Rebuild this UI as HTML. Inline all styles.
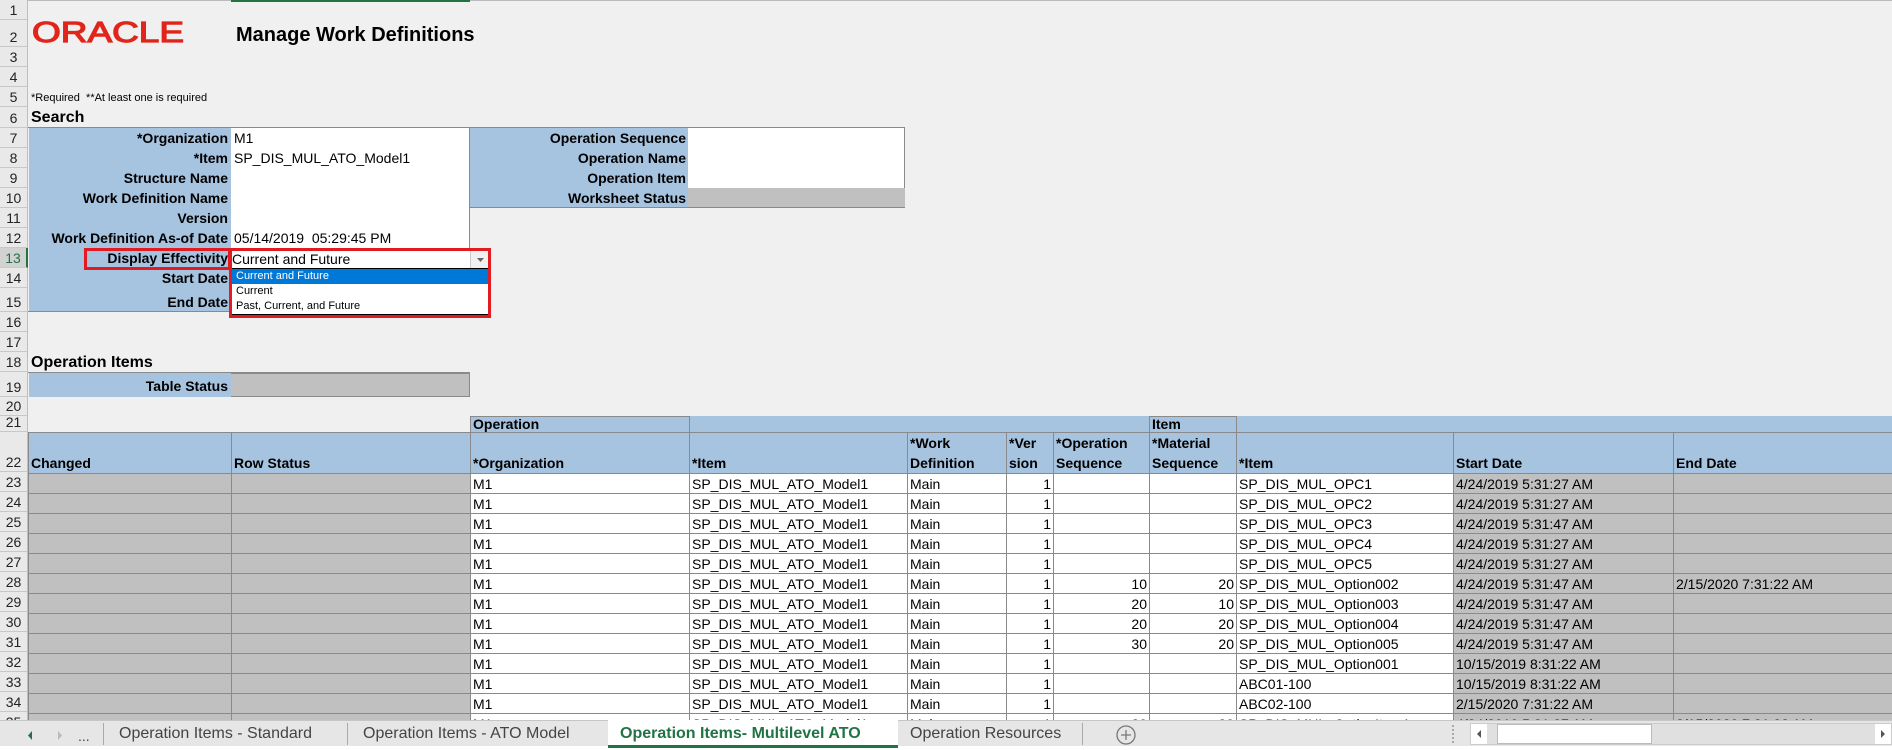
<!DOCTYPE html>
<html><head><meta charset="utf-8"><style>
*{margin:0;padding:0;box-sizing:border-box}
body{width:1892px;height:750px;overflow:hidden;background:#f0f0f0;font-family:"Liberation Sans",Arial,sans-serif;font-size:14px;color:#000;position:relative}
.a{position:absolute;white-space:nowrap;overflow:hidden}
.rh{position:absolute;left:0;width:28px;background:#e9e9e9;border-bottom:1px solid #c8c8c8;border-right:1px solid #bdbdbd;text-align:center;font-size:14px;color:#222;display:flex;align-items:flex-end;justify-content:center;padding-bottom:1px}
.lb{background:#a6c3df;font-weight:bold;text-align:right;padding-right:3px;line-height:20px}
.w{background:#fff;line-height:20px;padding-left:3px}
table{position:absolute;left:28px;top:432px;border-collapse:collapse;table-layout:fixed;width:1867px}
td{border:1px solid #8a8a8a;height:20px;padding:0 2px;white-space:nowrap;overflow:hidden;font-size:14px;line-height:18px;background:#fff}
td.g{background:#c0c0c0}
tr.h td{background:#a6c3df;font-weight:bold;height:40px;vertical-align:bottom;line-height:20px}
td.r{text-align:right}
</style></head><body>
<div class="a" style="left:0;top:0;width:1892px;height:1px;background:#bbb"></div>
<div class="a" style="left:231px;top:0;width:239px;height:2px;background:#217346"></div>
<div class="rh" style="top:0;height:20px">1</div>
<div class="rh" style="top:20px;height:27px">2</div>
<div class="rh" style="top:47px;height:20px">3</div>
<div class="rh" style="top:67px;height:20px">4</div>
<div class="rh" style="top:87px;height:20px">5</div>
<div class="rh" style="top:107px;height:21px">6</div>
<div class="rh" style="top:128px;height:20px">7</div>
<div class="rh" style="top:148px;height:20px">8</div>
<div class="rh" style="top:168px;height:20px">9</div>
<div class="rh" style="top:188px;height:20px">10</div>
<div class="rh" style="top:208px;height:20px">11</div>
<div class="rh" style="top:228px;height:20px">12</div>
<div class="rh" style="top:248px;height:20px;background:#d2d2d2;color:#217346;border-right:2px solid #217346">13</div>
<div class="rh" style="top:268px;height:20px">14</div>
<div class="rh" style="top:288px;height:24px">15</div>
<div class="rh" style="top:312px;height:20px">16</div>
<div class="rh" style="top:332px;height:20px">17</div>
<div class="rh" style="top:352px;height:20px">18</div>
<div class="rh" style="top:372px;height:25px">19</div>
<div class="rh" style="top:397px;height:19px">20</div>
<div class="rh" style="top:416px;height:16px">21</div>
<div class="rh" style="top:432px;height:40px">22</div>
<div class="rh" style="top:472px;height:20px">23</div>
<div class="rh" style="top:492px;height:20px">24</div>
<div class="rh" style="top:512px;height:20px">25</div>
<div class="rh" style="top:532px;height:20px">26</div>
<div class="rh" style="top:552px;height:20px">27</div>
<div class="rh" style="top:572px;height:20px">28</div>
<div class="rh" style="top:592px;height:20px">29</div>
<div class="rh" style="top:612px;height:20px">30</div>
<div class="rh" style="top:632px;height:20px">31</div>
<div class="rh" style="top:652px;height:20px">32</div>
<div class="rh" style="top:672px;height:20px">33</div>
<div class="rh" style="top:692px;height:20px">34</div>
<div class="rh" style="top:712px;height:20px">35</div>

<svg class="a" style="left:31px;top:18px" width="160" height="28"><text x="1" y="24" font-family="Liberation Sans,Arial,sans-serif" font-size="29" fill="#e1251b" stroke="#e1251b" stroke-width="1.2" textLength="152" lengthAdjust="spacingAndGlyphs">ORACLE</text></svg>
<div class="a" style="left:236px;top:22px;font-size:20px;font-weight:bold;line-height:26px">Manage Work Definitions</div>
<div class="a" style="left:31px;top:91px;font-size:11px;line-height:14px">*Required &nbsp;**At least one is required</div>
<div class="a" style="left:31px;top:107px;font-size:16px;font-weight:bold;line-height:21px">Search</div>

<div class="a lb" style="left:29px;top:128px;width:202px;height:20px">*Organization</div>
<div class="a lb" style="left:29px;top:148px;width:202px;height:20px">*Item</div>
<div class="a lb" style="left:29px;top:168px;width:202px;height:20px">Structure Name</div>
<div class="a lb" style="left:29px;top:188px;width:202px;height:20px">Work Definition Name</div>
<div class="a lb" style="left:29px;top:208px;width:202px;height:20px">Version</div>
<div class="a lb" style="left:29px;top:228px;width:202px;height:20px">Work Definition As-of Date</div>
<div class="a lb" style="left:29px;top:248px;width:202px;height:20px">Display Effectivity</div>
<div class="a lb" style="left:29px;top:268px;width:202px;height:20px">Start Date</div>
<div class="a lb" style="left:29px;top:288px;width:202px;height:24px;line-height:28px">End Date</div>
<div class="a" style="left:231px;top:268px;width:239px;height:44px;background:#a6c3df"></div>
<div class="a" style="left:28px;top:311px;width:442px;height:1px;background:#8a8a8a"></div>
<div class="a w" style="left:231px;top:128px;width:239px;height:120px;border-right:1px solid #8a8a8a"></div>
<div class="a" style="left:234px;top:128px;line-height:20px">M1</div>
<div class="a" style="left:234px;top:148px;line-height:20px">SP_DIS_MUL_ATO_Model1</div>
<div class="a" style="left:234px;top:228px;line-height:20px">05/14/2019&nbsp; 05:29:45 PM</div>
<div class="a" style="left:28px;top:127px;width:877px;height:1px;background:#8a8a8a"></div>

<div class="a lb" style="left:470px;top:128px;width:218px;height:80px;line-height:20px;padding-right:2px">Operation Sequence<br>Operation Name<br>Operation Item<br>Worksheet Status</div>
<div class="a" style="left:688px;top:128px;width:217px;height:60px;background:#fff;border-right:1px solid #8a8a8a"></div>
<div class="a" style="left:688px;top:188px;width:217px;height:20px;background:#c0c0c0"></div>
<div class="a" style="left:470px;top:207px;width:435px;height:1px;background:#8a8a8a"></div>

<div class="a" style="left:84px;top:248px;width:147px;height:22px;border:3px solid #e21b23"></div>
<div class="a" style="left:229px;top:248px;width:262px;height:70px;border:3px solid #e21b23;background:#fff"></div>
<div class="a" style="left:232px;top:251px;line-height:17px;font-size:14px">Current and Future</div>
<div class="a" style="left:470px;top:251px;width:18px;height:17px;background:#f0f0f0;border-left:1px solid #ccc"><svg width="18" height="17"><path d="M6 7h7l-3.5 4z" fill="#666"/></svg></div>
<div class="a" style="left:232px;top:268px;width:256px;height:1px;background:#000"></div>
<div class="a" style="left:232px;top:269px;width:256px;height:15px;background:#0078d7;color:#fff;font-size:11px;line-height:15px;padding-left:4px">Current and Future</div>
<div class="a" style="left:232px;top:284px;font-size:11px;line-height:15px;padding-left:4px">Current</div>
<div class="a" style="left:232px;top:299px;font-size:11px;line-height:15px;padding-left:4px">Past, Current, and Future</div>
<div class="a" style="left:232px;top:314px;width:256px;height:1px;background:#000"></div>

<div class="a" style="left:31px;top:352px;font-size:16px;font-weight:bold;line-height:22px">Operation Items</div>
<div class="a lb" style="left:29px;top:373px;width:202px;height:24px;line-height:26px">Table Status</div>
<div class="a" style="left:231px;top:373px;width:239px;height:24px;background:#c0c0c0;border:1px solid #8a8a8a;border-left:none"></div>
<div class="a" style="left:28px;top:372px;width:442px;height:1px;background:#8a8a8a"></div>

<div class="a" style="left:470px;top:416px;width:1422px;height:16px;background:#a6c3df"></div>
<div class="a" style="left:470px;top:416px;width:220px;height:17px;border:1px solid #8a8a8a;font-weight:bold;line-height:14px;padding-left:2px">Operation</div>
<div class="a" style="left:1149px;top:416px;width:88px;height:17px;border:1px solid #8a8a8a;font-weight:bold;line-height:14px;padding-left:2px">Item</div>

<table>
<colgroup><col style="width:203px"><col style="width:239px"><col style="width:219px"><col style="width:218px"><col style="width:99px"><col style="width:47px"><col style="width:96px"><col style="width:87px"><col style="width:217px"><col style="width:220px"><col style="width:222px"></colgroup>
<tr class="h"><td>Changed</td><td>Row Status</td><td>*Organization</td><td>*Item</td><td>*Work<br>Definition</td><td>*Ver<br>sion</td><td>*Operation<br>Sequence</td><td>*Material<br>Sequence</td><td>*Item</td><td>Start Date</td><td>End Date</td></tr>
<tr><td class="g"></td><td class="g"></td><td>M1</td><td>SP_DIS_MUL_ATO_Model1</td><td>Main</td><td class="r">1</td><td></td><td></td><td>SP_DIS_MUL_OPC1</td><td class="g">4/24/2019 5:31:27 AM</td><td class="g"></td></tr>
<tr><td class="g"></td><td class="g"></td><td>M1</td><td>SP_DIS_MUL_ATO_Model1</td><td>Main</td><td class="r">1</td><td></td><td></td><td>SP_DIS_MUL_OPC2</td><td class="g">4/24/2019 5:31:27 AM</td><td class="g"></td></tr>
<tr><td class="g"></td><td class="g"></td><td>M1</td><td>SP_DIS_MUL_ATO_Model1</td><td>Main</td><td class="r">1</td><td></td><td></td><td>SP_DIS_MUL_OPC3</td><td class="g">4/24/2019 5:31:47 AM</td><td class="g"></td></tr>
<tr><td class="g"></td><td class="g"></td><td>M1</td><td>SP_DIS_MUL_ATO_Model1</td><td>Main</td><td class="r">1</td><td></td><td></td><td>SP_DIS_MUL_OPC4</td><td class="g">4/24/2019 5:31:27 AM</td><td class="g"></td></tr>
<tr><td class="g"></td><td class="g"></td><td>M1</td><td>SP_DIS_MUL_ATO_Model1</td><td>Main</td><td class="r">1</td><td></td><td></td><td>SP_DIS_MUL_OPC5</td><td class="g">4/24/2019 5:31:27 AM</td><td class="g"></td></tr>
<tr><td class="g"></td><td class="g"></td><td>M1</td><td>SP_DIS_MUL_ATO_Model1</td><td>Main</td><td class="r">1</td><td class="r">10</td><td class="r">20</td><td>SP_DIS_MUL_Option002</td><td class="g">4/24/2019 5:31:47 AM</td><td class="g">2/15/2020 7:31:22 AM</td></tr>
<tr><td class="g"></td><td class="g"></td><td>M1</td><td>SP_DIS_MUL_ATO_Model1</td><td>Main</td><td class="r">1</td><td class="r">20</td><td class="r">10</td><td>SP_DIS_MUL_Option003</td><td class="g">4/24/2019 5:31:47 AM</td><td class="g"></td></tr>
<tr><td class="g"></td><td class="g"></td><td>M1</td><td>SP_DIS_MUL_ATO_Model1</td><td>Main</td><td class="r">1</td><td class="r">20</td><td class="r">20</td><td>SP_DIS_MUL_Option004</td><td class="g">4/24/2019 5:31:47 AM</td><td class="g"></td></tr>
<tr><td class="g"></td><td class="g"></td><td>M1</td><td>SP_DIS_MUL_ATO_Model1</td><td>Main</td><td class="r">1</td><td class="r">30</td><td class="r">20</td><td>SP_DIS_MUL_Option005</td><td class="g">4/24/2019 5:31:47 AM</td><td class="g"></td></tr>
<tr><td class="g"></td><td class="g"></td><td>M1</td><td>SP_DIS_MUL_ATO_Model1</td><td>Main</td><td class="r">1</td><td></td><td></td><td>SP_DIS_MUL_Option001</td><td class="g">10/15/2019 8:31:22 AM</td><td class="g"></td></tr>
<tr><td class="g"></td><td class="g"></td><td>M1</td><td>SP_DIS_MUL_ATO_Model1</td><td>Main</td><td class="r">1</td><td></td><td></td><td>ABC01-100</td><td class="g">10/15/2019 8:31:22 AM</td><td class="g"></td></tr>
<tr><td class="g"></td><td class="g"></td><td>M1</td><td>SP_DIS_MUL_ATO_Model1</td><td>Main</td><td class="r">1</td><td></td><td></td><td>ABC02-100</td><td class="g">2/15/2020 7:31:22 AM</td><td class="g"></td></tr>
<tr><td class="g"></td><td class="g"></td><td>M1</td><td>SP_DIS_MUL_ATO_Model1</td><td>Main</td><td class="r">1</td><td class="r">20</td><td class="r">20</td><td>SP_DIS_MUL_OptionItem1</td><td class="g">4/24/2019 5:31:27 AM</td><td class="g">2/15/2020 7:31:22 AM</td></tr>
</table>

<div class="a" style="left:0;top:720px;width:1892px;height:30px;background:#e6e6e6;border-top:1px solid #c6c6c6"></div>
<div class="a" style="left:0;top:746px;width:1892px;height:4px;background:#fff"></div>
<svg class="a" style="left:20px;top:724px" width="90" height="22"><path d="M12 7v9l-4-4.5z" fill="#217346"/><path d="M38 7v9l4-4.5z" fill="#bbb"/><text x="58" y="17" font-size="14" fill="#444" font-family="Liberation Sans">...</text></svg>
<div class="a" style="left:103px;top:723px;width:1px;height:22px;background:#aaa"></div>
<div class="a" style="left:119px;top:720px;line-height:28px;font-size:16px;color:#444">Operation Items - Standard</div>
<div class="a" style="left:347px;top:723px;width:1px;height:22px;background:#aaa"></div>
<div class="a" style="left:363px;top:720px;line-height:28px;font-size:16px;color:#444">Operation Items - ATO Model</div>
<div class="a" style="left:608px;top:720px;width:290px;height:28px;background:#fff;border-bottom:3px solid #217346"></div>
<div class="a" style="left:620px;top:720px;line-height:28px;font-size:16px;color:#217346;font-weight:bold">Operation Items- Multilevel ATO</div>
<div class="a" style="left:910px;top:720px;line-height:28px;font-size:16px;color:#444">Operation Resources</div>
<div class="a" style="left:1082px;top:723px;width:1px;height:22px;background:#aaa"></div>
<svg class="a" style="left:1114px;top:723px" width="24" height="24"><circle cx="12" cy="12" r="9" fill="none" stroke="#777" stroke-width="1.3"/><path d="M12 7v10M7 12h10" stroke="#777" stroke-width="1.3"/></svg>
<div class="a" style="left:1452px;top:725px;width:2px;height:18px;border-left:2px dotted #aaa"></div>
<div class="a" style="left:1470px;top:723px;width:422px;height:22px;background:#e0e0e0;border:1px solid #ccc"></div>
<div class="a" style="left:1471px;top:724px;width:16px;height:20px;background:#fff"><svg width="16" height="20"><path d="M10 6v8l-4-4z" fill="#555"/></svg></div>
<div class="a" style="left:1497px;top:724px;width:155px;height:20px;background:#fff;border:1px solid #bbb"></div>
<div class="a" style="left:1875px;top:724px;width:16px;height:20px;background:#fff"><svg width="16" height="20"><path d="M6 6v8l4-4z" fill="#555"/></svg></div>
</body></html>
